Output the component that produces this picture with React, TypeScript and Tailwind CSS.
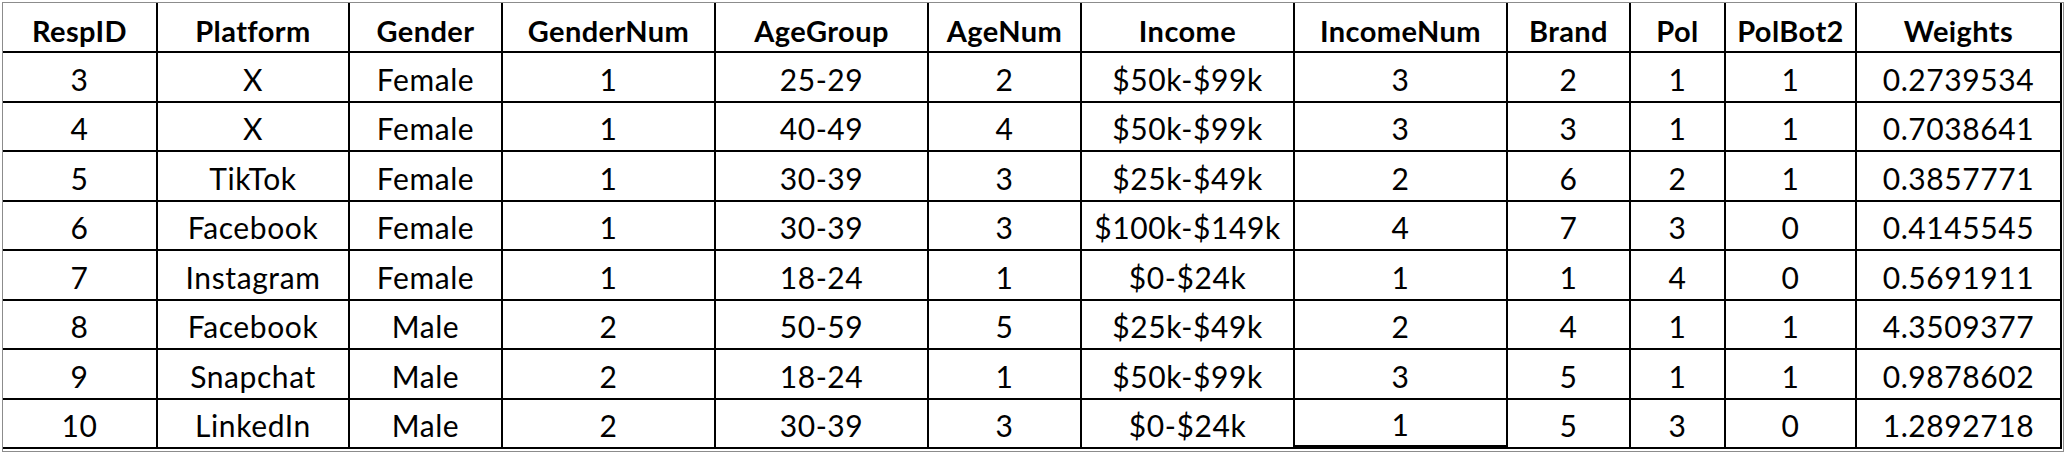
import React from "react";

const headers = [
  "RespID",
  "Platform",
  "Gender",
  "GenderNum",
  "AgeGroup",
  "AgeNum",
  "Income",
  "IncomeNum",
  "Brand",
  "Pol",
  "PolBot2",
  "Weights",
];

const rows: string[][] = [
  ["3", "X", "Female", "1", "25-29", "2", "$50k-$99k", "3", "2", "1", "1", "0.2739534"],
  ["4", "X", "Female", "1", "40-49", "4", "$50k-$99k", "3", "3", "1", "1", "0.7038641"],
  ["5", "TikTok", "Female", "1", "30-39", "3", "$25k-$49k", "2", "6", "2", "1", "0.3857771"],
  ["6", "Facebook", "Female", "1", "30-39", "3", "$100k-$149k", "4", "7", "3", "0", "0.4145545"],
  ["7", "Instagram", "Female", "1", "18-24", "1", "$0-$24k", "1", "1", "4", "0", "0.5691911"],
  ["8", "Facebook", "Male", "2", "50-59", "5", "$25k-$49k", "2", "4", "1", "1", "4.3509377"],
  ["9", "Snapchat", "Male", "2", "18-24", "1", "$50k-$99k", "3", "5", "1", "1", "0.9878602"],
  ["10", "LinkedIn", "Male", "2", "30-39", "3", "$0-$24k", "1", "5", "3", "0", "1.2892718"],
];

export default function App() {
  return (
    <div className="w-[2068px] h-[455px] bg-white overflow-hidden">
      <div
        className="ml-[2px] mt-[2px] inline-block border border-[#8c8c8c] pr-[1px] pb-[2px] bg-white"
        style={{ fontFamily: "Lato, 'Liberation Sans', sans-serif" }}
      >
        <div className="grid grid-cols-[155px_192px_153px_213px_213px_153px_213px_213px_123px_95px_131px_205px] text-black">
          {headers.map((h) => (
            <div
              key={h}
              className="h-[50px] flex items-center justify-center border-r-2 border-b-2 border-black pt-[6px] text-[29px] tracking-[0.4px] font-bold leading-none"
            >
              {h}
            </div>
          ))}
          {rows.map((r, ri) =>
            r.map((c, ci) => {
              const last = ri === rows.length - 1;
              const thick = last && ci === 7;
              return (
                <div
                  key={`${ri}-${ci}`}
                  className={`${ri % 2 === 0 ? "h-[50px]" : "h-[49px]"} flex items-center justify-center border-r-2 ${
                    thick ? "border-b-4" : "border-b-2"
                  } border-black pt-[3px] text-[30px] tracking-[0.6px] leading-none`}
                >
                  {c}
                </div>
              );
            })
          )}
        </div>
      </div>
    </div>
  );
}
